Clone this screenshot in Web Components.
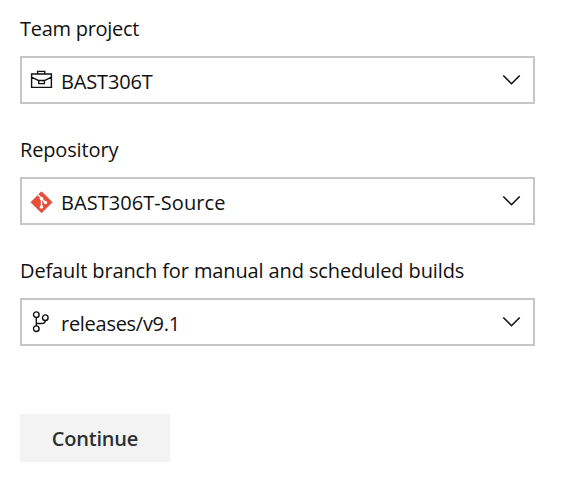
<!DOCTYPE html>
<html lang="en"><head><meta charset="utf-8"><title>Build source</title>
<style>html,body{margin:0;background:#fff}body{font:20px/28px "Open Sans","Noto Sans",sans-serif;color:#111}</style></head>
<body>
<source-form>
<select-field label="Team project" value="BAST306T" icon="briefcase" style="--ls:-.28px;--vs:-.15px"></select-field>
<select-field label="Repository" value="BAST306T-Source" icon="git" style="--ls:-.15px;--vs:.06px"></select-field>
<select-field label="Default branch for manual and scheduled builds" value="releases/v9.1" icon="branch" style="--ls:-.12px;--vs:-.28px"></select-field>
<action-button>Continue</action-button>
</source-form>
<script>
const icons={
briefcase:`<path d="M1.6 6h19.8v13.4H1.6zM7.6 6V3.4h7.2V6M1.6 9.2l7.1 3.4M21.4 9.2l-7 3.4M8.7 12.5h5.7v3.1H8.7z" fill="none" stroke="#111" stroke-width="1.4"/>`,
git:`<g transform="translate(0 2)"><path d="M11.5.8 22 11.3 11.5 21.8 1 11.3Z" fill="#e84e38" stroke="#e84e38" stroke-linejoin="round"/><path d="M8 3.8l3.5 3.5V16M11.5 7.5l3.9 3.9" fill="none" stroke="#fff" stroke-width="1.4"/><g fill="#fff"><circle cx="11.5" cy="7.6" r="1.8"/><circle cx="11.5" cy="16" r="1.8"/><circle cx="15.4" cy="11.5" r="1.8"/></g></g>`,
branch:`<g fill="none" stroke="#111" stroke-width="1.4"><circle cx="6.3" cy="4.7" r="2.8"/><circle cx="15.3" cy="7.7" r="2.8"/><circle cx="6.3" cy="18.7" r="2.8"/><path d="M6.3 7.5v8.4M6.3 13.5h5.2c2.6 0 3.8-.9 3.8-3"/></g>`};
customElements.define('source-form',class extends HTMLElement{constructor(){super();this.attachShadow({mode:'open'}).innerHTML=`<style>:host{display:flex;flex-direction:column;align-items:flex-start;gap:32px;padding:15px 0 0 20px;width:515px}::slotted(action-button){margin-top:36px}</style><slot></slot>`}});
customElements.define('ui-icon',class extends HTMLElement{connectedCallback(){this.attachShadow({mode:'open'}).innerHTML=`<style>:host{display:block;width:23px;height:24px}svg{display:block;overflow:visible}</style><svg width="23" height="24" viewBox="0 0 23 24">${icons[this.getAttribute('name')]}</svg>`}});
customElements.define('select-field',class extends HTMLElement{connectedCallback(){this.attachShadow({mode:'open'}).innerHTML=`<style>:host{display:block;width:100%}.label{height:41px;white-space:nowrap;letter-spacing:var(--ls)}.box{box-sizing:border-box;height:48px;border:2px solid #c6c6c6;display:flex;align-items:center;padding:0 12px 0 8px}.value{flex:1;margin:3px 0 0 8px;letter-spacing:var(--vs);white-space:nowrap}.chevron{display:block}</style><div class="label">${this.getAttribute('label')}</div><div class="box"><ui-icon name="${this.getAttribute('icon')}"></ui-icon><span class="value">${this.getAttribute('value')}</span><svg class="chevron" width="19" height="12" viewBox="0 0 19 12"><path d="m1.3 1.5 8.2 8.2 8.2-8.2" fill="none" stroke="#111" stroke-width="1.6"/></svg></div>`}});
customElements.define('action-button',class extends HTMLElement{constructor(){super();this.attachShadow({mode:'open'}).innerHTML=`<style>:host{display:block}button{display:block;width:150px;height:48px;padding:2px 0 0;border:0;background:#f3f3f3;color:#2d3033;font:600 20px/28px "Open Sans","Noto Sans",sans-serif;letter-spacing:var(--ls,-.2px)}</style><button><slot></slot></button>`}});
</script></body></html>
